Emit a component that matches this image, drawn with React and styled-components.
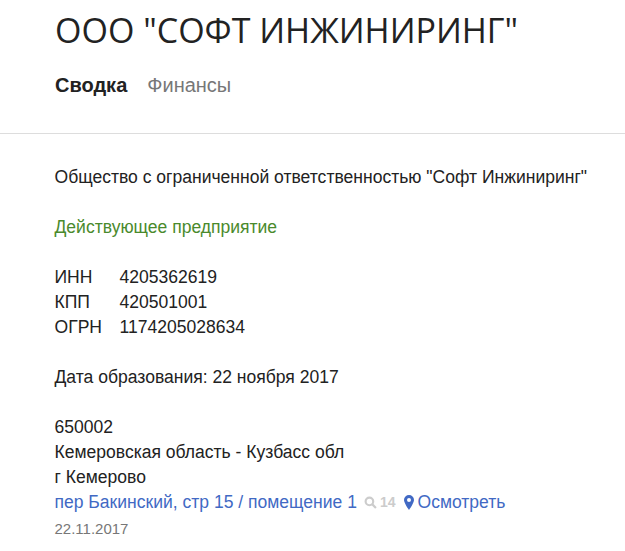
import React from "react";
import styled, { createGlobalStyle } from "styled-components";

const Global = createGlobalStyle`
  html, body {
    margin: 0;
    padding: 0;
    background: #fff;
    overflow: hidden;
  }
  body {
    font-family: "Liberation Sans", Arial, sans-serif;
    color: #222;
  }
`;

const Page = styled.div`
  width: 625px;
  height: 551px;
  overflow: hidden;
`;

const Header = styled.header`
  padding: 7px 55px 0;
  box-sizing: border-box;
  height: 134px;
  border-bottom: 1px solid #ddd;
`;

const Title = styled.h1`
  margin: 0;
  font-family: "Open Sans", sans-serif;
  font-size: 34px;
  font-weight: 400;
  line-height: 46px;
  color: #222;
  white-space: nowrap;
`;

const Tabs = styled.nav`
  display: flex;
  gap: 20px;
  margin-top: 20px;
`;

const Tab = styled.span`
  font-size: 20px;
  line-height: 25px;
  font-weight: ${(p) => (p.$active ? 700 : 400)};
  color: ${(p) => (p.$active ? "#222" : "#777")};
`;

const Content = styled.main`
  padding: 31px 0 0 54.5px;
  font-size: 17.55px;
  line-height: 25px;
`;

const Block = styled.div`
  margin-bottom: 25px;
  white-space: nowrap;
`;

const Status = styled(Block)`
  color: #4a8a2c;
`;

const CodeRow = styled.div`
  display: flex;
`;

const CodeName = styled.span`
  width: 65px;
`;

const AddressLine = styled.div`
  display: flex;
  align-items: center;
  color: #4169c4;
  white-space: nowrap;
`;

const Hits = styled.span`
  display: inline-flex;
  align-items: center;
  gap: 3px;
  margin: 0 8px 0 7px;
  font-size: 14px;
  font-weight: 700;
  color: #ccc;
`;

const Inspect = styled.span`
  display: inline-flex;
  align-items: center;
  gap: 4px;
`;

const DateNote = styled.div`
  font-size: 15px;
  line-height: 27px;
  color: #777;
`;

export default function App() {
  return (
    <Page>
      <Global />
      <Header>
        <Title>ООО "СОФТ ИНЖИНИРИНГ"</Title>
        <Tabs>
          <Tab $active>Сводка</Tab>
          <Tab>Финансы</Tab>
        </Tabs>
      </Header>
      <Content>
        <Block>Общество с ограниченной ответственностью "Софт Инжиниринг"</Block>
        <Status>Действующее предприятие</Status>
        <Block>
          <CodeRow><CodeName>ИНН</CodeName><span>4205362619</span></CodeRow>
          <CodeRow><CodeName>КПП</CodeName><span>420501001</span></CodeRow>
          <CodeRow><CodeName>ОГРН</CodeName><span>1174205028634</span></CodeRow>
        </Block>
        <Block>Дата образования: 22 ноября 2017</Block>
        <div>650002</div>
        <div>Кемеровская область - Кузбасс обл</div>
        <div>г Кемерово</div>
        <AddressLine>
          <span>пер Бакинский, стр 15 / помещение 1</span>
          <Hits>
            <svg width="13" height="13" viewBox="0 0 12 12" fill="none" stroke="#ccc" strokeWidth="2">
              <circle cx="5" cy="5" r="3.5" />
              <path d="M7.5 7.5L11 11" />
            </svg>
            14
          </Hits>
          <Inspect>
            <svg width="10" height="15" viewBox="0 0 10 15">
              <path fillRule="evenodd" fill="#4169c4" d="M5 0a5 5 0 0 1 5 5c0 3-5 10-5 10S0 8 0 5a5 5 0 0 1 5-5zm0 3a2 2 0 1 0 0 4 2 2 0 0 0 0-4z" />
            </svg>
            Осмотреть
          </Inspect>
        </AddressLine>
        <DateNote>22.11.2017</DateNote>
      </Content>
    </Page>
  );
}
